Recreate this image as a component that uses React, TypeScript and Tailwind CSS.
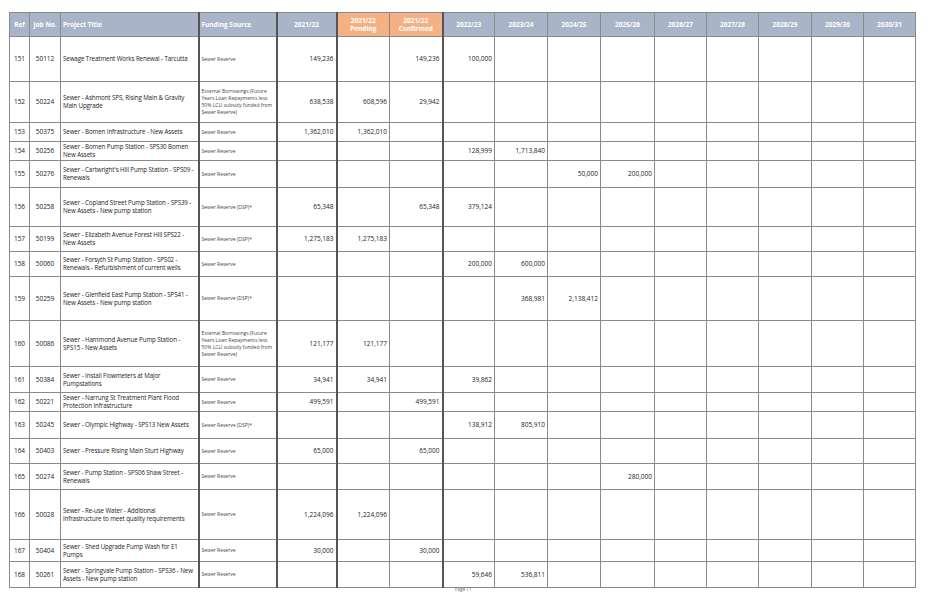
import React from "react";

const cols = [20, 31, 138, 78, 60, 53, 53, 52, 53, 53, 54, 52, 52, 53, 52, 52];
const years = ["2022/23", "2023/24", "2024/25", "2025/26", "2026/27", "2027/28", "2028/29", "2029/30", "2030/31"];
const EB = "External Borrowings (Future Years Loan Repayments less 50% LCLI subsidy funded from Sewer Reserve)";
type R = [number, string, string, string, string, string, string, Record<number, string>, number, boolean?];
const rows: R[] = [
  [151, "50112", "Sewage Treatment Works Renewal - Tarcutta", "Sewer Reserve", "149,236", "", "149,236", { 0: "100,000" }, 45, true],
  [152, "50224", "Sewer - Ashmont SPS, Rising Main & Gravity Main Upgrade", EB, "638,538", "608,596", "29,942", {}, 41],
  [153, "50375", "Sewer - Bomen Infrastructure - New Assets", "Sewer Reserve", "1,362,010", "1,362,010", "", {}, 19],
  [154, "50256", "Sewer - Bomen Pump Station - SPS30 Bomen New Assets", "Sewer Reserve", "", "", "", { 0: "128,999", 1: "1,713,840" }, 19],
  [155, "50276", "Sewer - Cartwright's Hill Pump Station - SPS09 - Renewals", "Sewer Reserve", "", "", "", { 2: "50,000", 3: "200,000" }, 27],
  [156, "50258", "Sewer - Copland Street Pump Station - SPS39 - New Assets - New pump station", "Sewer Reserve (DSP)*", "65,348", "", "65,348", { 0: "379,124" }, 39],
  [157, "50199", "Sewer - Elizabeth Avenue Forest Hill SPS22 - New Assets", "Sewer Reserve (DSP)*", "1,275,183", "1,275,183", "", {}, 25],
  [158, "50060", "Sewer - Forsyth St Pump Station - SPS02 - Renewals - Refurbishment of current wells", "Sewer Reserve", "", "", "", { 0: "200,000", 1: "600,000" }, 25],
  [159, "50259", "Sewer - Glenfield East Pump Station - SPS41 - New Assets - New pump station", "Sewer Reserve (DSP)*", "", "", "", { 1: "368,981", 2: "2,138,412" }, 44],
  [160, "50086", "Sewer - Hammond Avenue Pump Station - SPS15 - New Assets", EB, "121,177", "121,177", "", {}, 46],
  [161, "50384", "Sewer - Install Flowmeters at Major Pumpstations", "Sewer Reserve", "34,941", "34,941", "", { 0: "39,862" }, 26],
  [162, "50221", "Sewer - Narrung St Treatment Plant Flood Protection Infrastructure", "Sewer Reserve", "499,591", "", "499,591", {}, 19],
  [163, "50245", "Sewer - Olympic Highway - SPS13 New Assets", "Sewer Reserve (DSP)*", "", "", "", { 0: "138,912", 1: "805,910" }, 27],
  [164, "50403", "Sewer - Pressure Rising Main Sturt Highway", "Sewer Reserve", "65,000", "", "65,000", {}, 25],
  [165, "50274", "Sewer - Pump Station - SPS06 Shaw Street - Renewals", "Sewer Reserve", "", "", "", { 3: "280,000" }, 26],
  [166, "50028", "Sewer - Re-use Water - Additional infrastructure to meet quality requirements", "Sewer Reserve", "1,224,096", "1,224,096", "", {}, 50],
  [167, "50404", "Sewer - Shed Upgrade Pump Wash for E1 Pumps", "Sewer Reserve", "30,000", "", "30,000", {}, 22],
  [168, "50261", "Sewer - Springvale Pump Station - SPS36 - New Assets - New pump station", "Sewer Reserve", "", "", "", { 0: "59,646", 1: "536,811" }, 26],
];

const td = "border border-[#8a8a8a] px-[2px] align-middle";
const thick = "border-r-[2px] border-r-[#555]";

export default function App() {
  return (
    <div className="w-[928px] h-[599px] bg-white relative" style={{ fontFamily: "'Open Sans','Liberation Sans',sans-serif" }}>
      <div className="pt-[12px] pl-[9px]">
        <table className="table-fixed border-collapse text-[6.5px] leading-[8px] text-[#222]" style={{ width: 906 }}>
          <colgroup>{cols.map((w, i) => <col key={i} style={{ width: w }} />)}</colgroup>
          <thead>
            <tr className="h-[24px] text-white font-bold">
              <th className={`${td} bg-[#a9b4c8] text-center`}>Ref</th>
              <th className={`${td} bg-[#a9b4c8] text-center`}>Job No.</th>
              <th className={`${td} bg-[#a9b4c8] text-left ${thick}`}>Project Title</th>
              <th className={`${td} bg-[#a9b4c8] text-left ${thick}`}>Funding Source</th>
              <th className={`${td} bg-[#a9b4c8] text-center ${thick}`}>2021/22</th>
              <th className={`${td} bg-[#f4b183] text-center`}>2021/22<br />Pending</th>
              <th className={`${td} bg-[#f4b183] text-center ${thick}`}>2021/22<br />Confirmed</th>
              {years.map(y => <th key={y} className={`${td} bg-[#a9b4c8] text-center`}>{y}</th>)}
            </tr>
          </thead>
          <tbody>
            {rows.map(r => (
              <tr key={r[0]} style={{ height: r[8] }}>
                <td className={`${td} text-center`}>{r[0]}</td>
                <td className={`${td} text-center`}>{r[1]}</td>
                <td className={`${td} ${thick} text-[6.2px] tracking-[-0.1px] ${r[9] ? "whitespace-nowrap" : ""}`}>{r[2]}</td>
                <td className={`${td} ${thick} text-[5px] leading-[7px] text-[#444]`}>{r[3]}</td>
                <td className={`${td} ${thick} text-right`}>{r[4]}</td>
                <td className={`${td} text-right`}>{r[5]}</td>
                <td className={`${td} ${thick} text-right`}>{r[6]}</td>
                {years.map((y, i) => <td key={y} className={`${td} text-right`}>{r[7][i] ?? ""}</td>)}
              </tr>
            ))}
          </tbody>
        </table>
      </div>
      <div className="absolute left-[455px] top-[586px] text-[4.5px] text-[#666]">Page 11</div>
    </div>
  );
}
